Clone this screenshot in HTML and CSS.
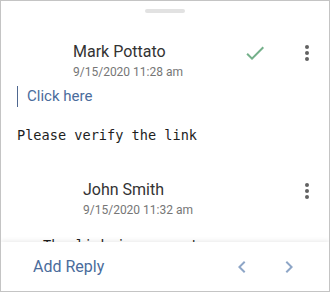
FILE: index.html
```html
<!DOCTYPE html>
<html>
<head>
<meta charset="utf-8">
<link rel="stylesheet" href="styles.css">
</head>
<body>
<div class="card">
  <div class="scroll">
    <div class="handle"></div>
    <div class="comment">
      <div class="head">
        <div class="info">
          <div class="name">Mark Pottato</div>
          <div class="date">9/15/2020 11:28 am</div>
        </div>
        <svg class="icon check" viewBox="0 0 24 24"><path d="M9 16.17L4.83 12l-1.42 1.41L9 19 21 7l-1.41-1.41z"/></svg>
        <svg class="icon kebab" viewBox="0 0 24 24"><circle cx="12" cy="6" r="2"/><circle cx="12" cy="12" r="2"/><circle cx="12" cy="18" r="2"/></svg>
      </div>
      <div class="quote">Click here</div>
      <div class="body">Please verify the link</div>
    </div>
    <div class="comment reply">
      <div class="head">
        <div class="info">
          <div class="name">John Smith</div>
          <div class="date">9/15/2020 11:32 am</div>
        </div>
        <svg class="icon kebab" viewBox="0 0 24 24"><circle cx="12" cy="6" r="2"/><circle cx="12" cy="12" r="2"/><circle cx="12" cy="18" r="2"/></svg>
      </div>
      <div class="body">The link is correct now</div>
    </div>
  </div>
  <div class="footer">
    <div class="add">Add Reply</div>
    <div class="nav">
      <svg class="icon chev" viewBox="0 0 24 24"><path d="M15.41 7.41L14 6l-6 6 6 6 1.41-1.41L10.83 12z"/></svg>
      <svg class="icon chev" viewBox="0 0 24 24"><path d="M10 6L8.59 7.41 13.17 12l-4.58 4.59L10 18l6-6z"/></svg>
    </div>
  </div>
</div>
</body>
</html>
```

FILE: styles.css
```css
html, body {
  margin: 0;
  padding: 0;
  background: #ffffff;
}
.card {
  width: 330px;
  height: 292px;
  box-sizing: border-box;
  border: 1px solid #c4c4c4;
  display: flex;
  flex-direction: column;
  overflow: hidden;
  font-family: Roboto, "Liberation Sans", sans-serif;
  background: #fff;
}
.scroll {
  flex: 1;
  min-height: 0;
  overflow: hidden;
}
.handle {
  width: 40px;
  height: 4px;
  border-radius: 2px;
  background: #e2e2e2;
  margin: 8px auto 0;
}
.comment {
  margin-top: 28px;
}
.reply {
  margin-top: 34px;
}
.head {
  display: flex;
  align-items: flex-start;
  padding-left: 72px;
  padding-right: 10px;
}
.reply .head {
  padding-left: 82px;
}
.info {
  flex: 1;
}
.name {
  font-size: 16px;
  line-height: 21px;
  color: #333333;
}
.date {
  font-size: 12px;
  line-height: 16px;
  margin-top: 2px;
  color: #767676;
}
.icon {
  width: 24px;
  height: 24px;
  flex: none;
  display: block;
}
.check {
  fill: #74b08a;
  margin-right: 28px;
}
.kebab {
  fill: #626262;
}
.quote {
  margin: 6px 0 0 16px;
  border-left: 1px solid #4f6890;
  padding-left: 9px;
  font-size: 15px;
  line-height: 21px;
  color: #4a6c9c;
}
.body {
  margin: 18px 0 0 16px;
  font-family: "DejaVu Sans Mono", monospace;
  font-size: 13.6px;
  line-height: 20px;
  color: #1e1e1e;
}
.reply .body {
  margin: 17px 0 0 42px;
}
.footer {
  position: relative;
  z-index: 1;
  flex: none;
  height: 49px;
  display: flex;
  align-items: center;
  justify-content: space-between;
  padding: 0 28px 0 32px;
  background: #fff;
  box-shadow: 0 -1px 5px rgba(0, 0, 0, 0.09);
}
.add {
  font-size: 16px;
  color: #4a6c9c;
}
.nav {
  display: flex;
  gap: 23px;
}
.chev {
  fill: #8ea6c7;
}
```
